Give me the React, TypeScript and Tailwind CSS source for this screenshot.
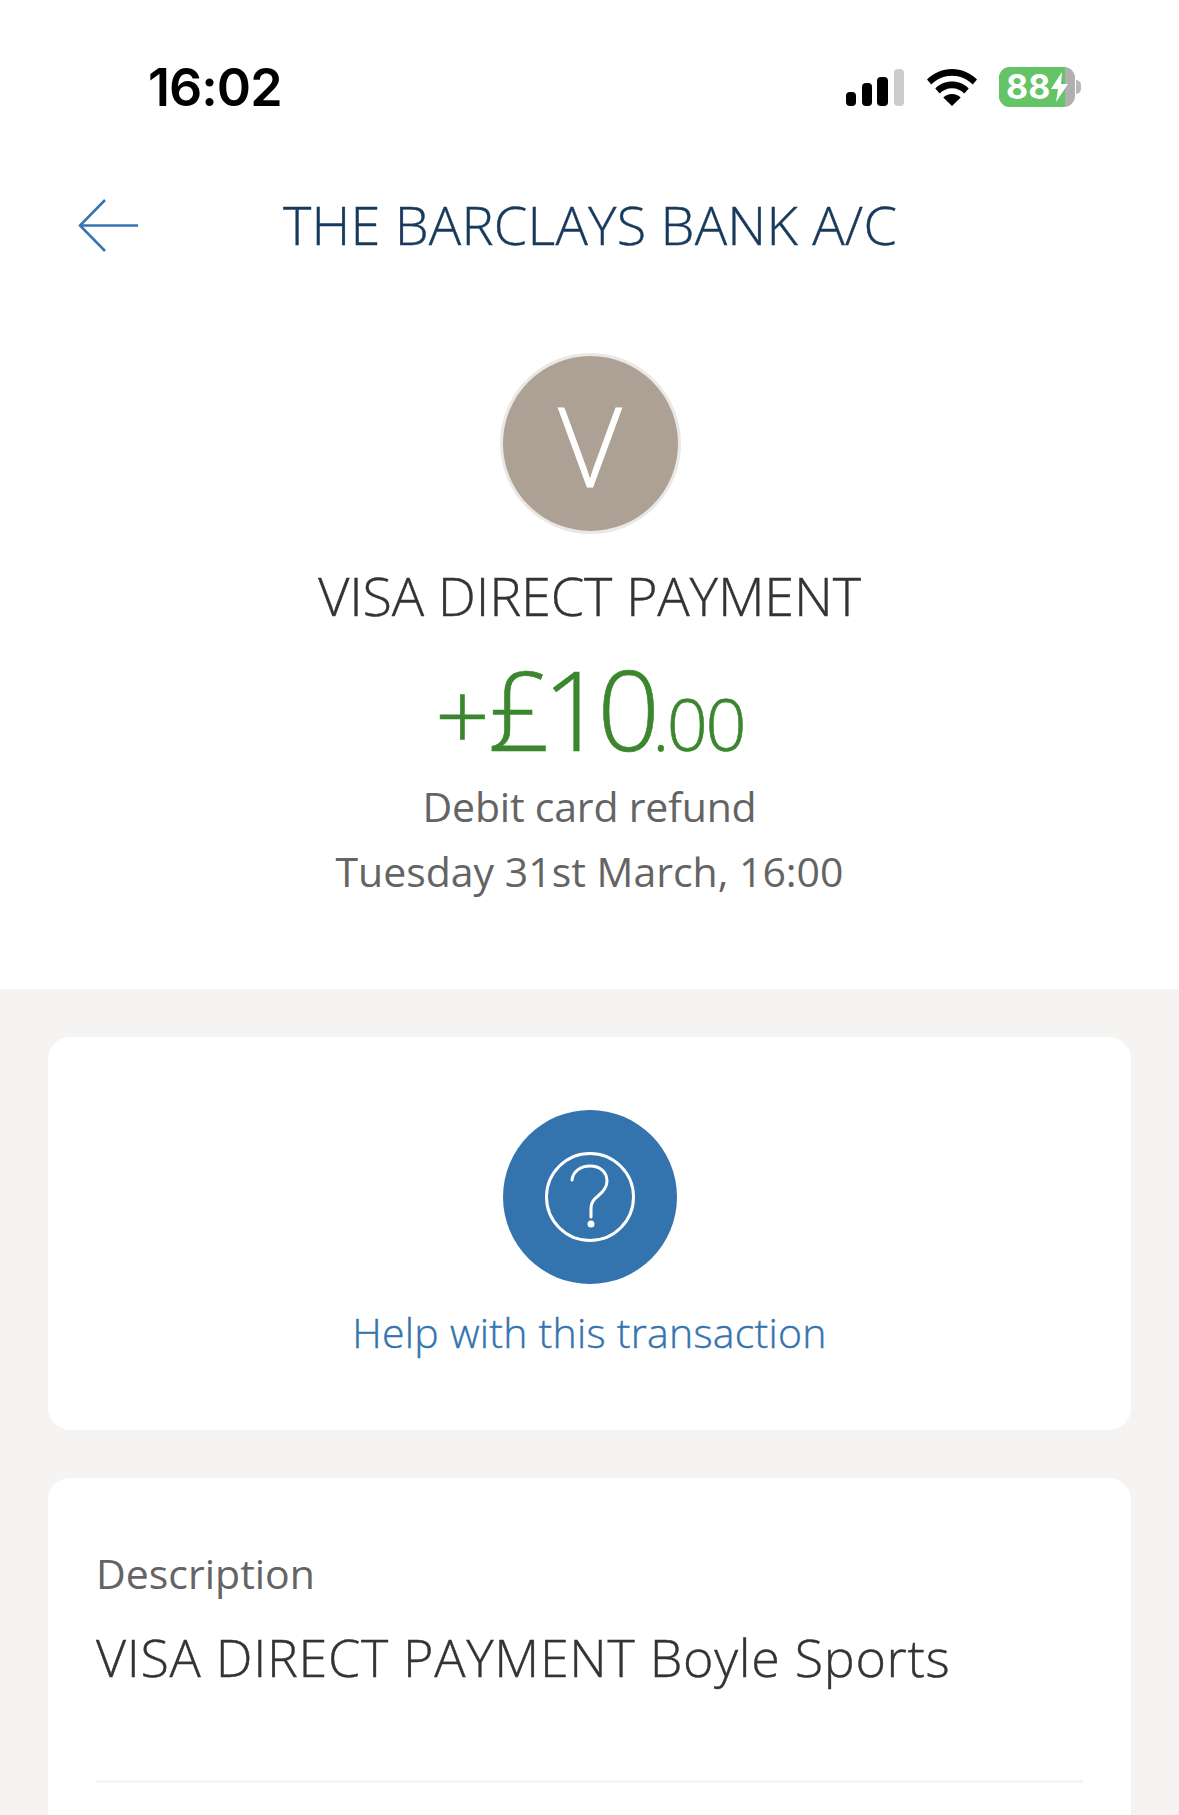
import React from "react";

const bodyFont = "font-['Open_Sans',sans-serif]";

const StatusBar = () => (
  <div className="flex h-[176px] items-center justify-between pl-[148px] pr-[98px]">
    <span className="font-['Inter',sans-serif] text-[52px] font-semibold leading-none tracking-[-1px] text-black">
      16:02
    </span>
    <div className="-mt-[2px] flex items-center">
      <svg width="58" height="37" viewBox="0 0 58 37" className="fill-black">
        <rect x="0" y="23" width="10" height="14" rx="4" />
        <rect x="16" y="14" width="10" height="23" rx="4" />
        <rect x="31" y="8" width="11" height="29" rx="4" />
        <rect x="48" y="0" width="10" height="37" rx="4" className="fill-[#cccccc]" />
      </svg>
      <svg width="50" height="37" viewBox="0 0 50 37" className="ml-[23px] fill-black">
        <path d="M25 0C15.500 0 7 3.700 0 10.500l4.300 5C10 10 17 6.800 25 6.800S40 10 45.700 15.500l4.300-5C43 3.700 34.500 0 25 0z" />
        <path d="M25 12.500c-6.500 0-12.300 2.600-16.700 6.900l4.400 5c3.200-3.100 7.500-5.100 12.300-5.100s9.100 2 12.300 5.100l4.400-5C37.300 15.100 31.500 12.500 25 12.500z" />
        <path d="M25 25c-3.500 0-6.500 1.300-8.700 3.500L25 37l8.700-8.500C31.500 26.300 28.500 25 25 25z" />
      </svg>
      <div className="ml-[22px] flex items-center">
        <div className="flex h-[40px] w-[76px] overflow-hidden rounded-[11px] bg-[#b0b0b0]">
          <div className="flex w-[66px] shrink-0 items-center bg-[#65c466] pl-[7px]">
            <span className="font-['Inter',sans-serif] text-[34px] font-bold leading-none text-white">88</span>
            <svg width="19" height="30" viewBox="0 0 19 30" className="-mr-[6px] shrink-0 fill-white">
              <path d="M12 0 1 17h7l-2 13L18 12h-7z" />
            </svg>
          </div>
        </div>
        <div className="ml-[1px] h-[14px] w-[5px] rounded-r-full bg-[#b8b8b8]" />
      </div>
    </div>
  </div>
);

const NavBar = () => (
  <div className="flex h-[98px] items-center pl-[78px]">
    <svg width="60" height="53" viewBox="0 0 60 53" fill="none" className="shrink-0 stroke-[#3474ae] stroke-[2.5]">
      <path d="M60 26.500H2" />
      <path d="M27 1 2 26.500 27 52" />
    </svg>
    <h1 className="-mt-[2px] ml-[145px] text-[54px] font-light leading-none tracking-[0.2px] whitespace-nowrap text-[#173a5c] [-webkit-text-stroke:0.4px]">
      THE BARCLAYS BANK A/C
    </h1>
  </div>
);

const Summary = () => (
  <div className="flex flex-col items-center">
    <div className="mt-[79px] ml-[1px] flex h-[181px] w-[181px] items-center justify-center rounded-full border-[3px] border-[#eae8e5] bg-[#ada195]">
      <span className="text-[110px] font-light leading-none text-white [-webkit-text-stroke:0.8px]">V</span>
    </div>
    <p className="mt-[31px] text-[54px] font-light leading-[60px] tracking-[-0.2px] text-[#333333] [-webkit-text-stroke:0.4px]">
      VISA DIRECT PAYMENT
    </p>
    <p className="mt-[28px] flex items-baseline leading-[110px] font-light text-[#3b862e] [-webkit-text-stroke:0.6px]">
      <span className="text-[96px] tracking-[-2px]">+</span>
      <span className="text-[110px] tracking-[-8px]">£10</span>
      <span className="text-[72px] tracking-[-2.500px]">.00</span>
    </p>
    <p className="-mt-[4px] text-[41px] font-medium leading-[65px] tracking-[-0.2px] text-[#646464]">Debit card refund</p>
    <p className="text-[41px] font-medium leading-[65px] text-[#646464]">Tuesday 31st March, 16:00</p>
  </div>
);

const HelpCard = () => (
  <div className="flex h-[393px] flex-col items-center rounded-[22px] bg-white pt-[73px]">
    <div className="flex h-[174px] w-[174px] items-center justify-center rounded-full bg-[#3474ae]">
      <svg width="90" height="90" viewBox="0 0 90 90" fill="none" className="stroke-white stroke-[3]">
        <circle cx="45" cy="45" r="43.500" />
        <path d="M27 28c1-9 9-14 18-14 10 0 17 6 17 15 0 7-4 11-9 15-4 3-7 6-7 12v9" strokeLinecap="round" />
        <circle cx="46" cy="72" r="2" className="fill-white" />
      </svg>
    </div>
    <p className="mt-[18px] text-[41px] font-light leading-[60px] tracking-[0.25px] text-[#3474ae] [-webkit-text-stroke:0.4px]">
      Help with this transaction
    </p>
  </div>
);

const DetailCard = () => (
  <div className="mt-[48px] rounded-[22px] bg-white px-[48px] pt-[70px]">
    <p className="text-[41px] font-medium leading-[50px] text-[#646464]">Description</p>
    <p className="mt-[29px] text-[52px] font-light leading-[60px] tracking-[0.7px] text-[#333333] [-webkit-text-stroke:0.4px]">
      VISA DIRECT PAYMENT Boyle Sports
    </p>
    <div className="mt-[93px] h-[3px] bg-[#f5f4f2]" />
    <div className="h-[60px]" />
  </div>
);

export default function App() {
  return (
    <div className={`h-[1815px] overflow-hidden bg-[#f5f4f2] ${bodyFont}`}>
      <div className="h-[989px] bg-white">
        <StatusBar />
        <NavBar />
        <Summary />
      </div>
      <div className="px-[48px] pt-[48px]">
        <HelpCard />
        <DetailCard />
      </div>
    </div>
  );
}
